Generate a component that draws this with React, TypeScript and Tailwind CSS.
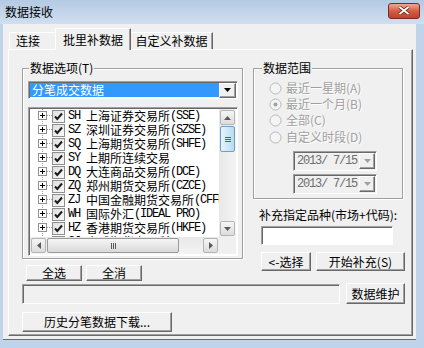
import type { ReactNode } from "react";

const ui = "font-['Noto_Sans_CJK_SC',sans-serif] text-[12px] leading-[14px]";
const mono = "font-['Liberation_Mono','Noto_Sans_CJK_SC',monospace] tracking-[-1.2px]";

const raised =
  "border border-t-white border-l-white border-r-[#696969] border-b-[#696969] shadow-[inset_-1px_-1px_0_#a0a0a0] bg-[#f0f0f0]";
const sunken =
  "border border-t-[#a0a0a0] border-l-[#a0a0a0] border-r-white border-b-white shadow-[inset_1px_1px_0_#696969]";
const etched = "border border-[#a0a0a0] shadow-[inset_1px_1px_0_#fff,1px_1px_0_#fff]";

const exchanges = [
  ["SH", "上海证券交易所", "(SSE)"],
  ["SZ", "深圳证券交易所", "(SZSE)"],
  ["SQ", "上海期货交易所", "(SHFE)"],
  ["SY", "上期所连续交易", ""],
  ["DQ", "大连商品交易所", "(DCE)"],
  ["ZQ", "郑州期货交易所", "(CZCE)"],
  ["ZJ", "中国金融期货交易所", "(CFFEX)"],
  ["WH", "国际外汇", "(IDEAL PRO)"],
  ["HZ", "香港期货交易所", "(HKFE)"],
  ["GJ", "全球期货交易所", ""],
];

const ranges = [
  { label: "最近一星期(A)", checked: false },
  { label: "最近一个月(B)", checked: true },
  { label: "全部(C)", checked: false },
  { label: "自定义时段(D)", checked: false },
];

function Arrow({ dir, color = "#4d4d4d" }: { dir: "up" | "down" | "left" | "right"; color?: string }) {
  const d = {
    up: "M0 4L3.5 0L7 4Z",
    down: "M0 0L7 0L3.5 4Z",
    left: "M4 0L4 7L0 3.5Z",
    right: "M0 0L4 3.5L0 7Z",
  }[dir];
  const vertical = dir === "up" || dir === "down";
  return (
    <svg width={vertical ? 7 : 4} height={vertical ? 4 : 7}>
      <path d={d} fill={color} />
    </svg>
  );
}

function ScrollBtn({ dir }: { dir: "up" | "down" | "left" | "right" }) {
  return (
    <div className="w-[17px] h-[17px] shrink-0 flex items-center justify-center p-[1px]">
      <div className="w-full h-full rounded-[2px] border border-[#b5b5b5] bg-gradient-to-b from-[#f6f6f6] to-[#dcdcdc] flex items-center justify-center">
        <Arrow dir={dir} color="#5a5a5a" />
      </div>
    </div>
  );
}

function TreeMark() {
  return (
    <svg width="14" height="14" className="shrink-0">
      <line x1="4.5" y1="0" x2="4.5" y2="14" stroke="#a0a0a0" strokeDasharray="1 1" />
      <rect x="0.5" y="2.5" width="8" height="8" fill="#fff" stroke="#919191" />
      <path d="M2 6.5H7M4.5 4V9" stroke="#000" />
      <path d="M9 6.5H14" stroke="#a0a0a0" strokeDasharray="1 1" />
    </svg>
  );
}

function Check() {
  return (
    <svg width="13" height="13" className="shrink-0">
      <defs>
        <linearGradient id="cb" x1="0" y1="0" x2="1" y2="1">
          <stop offset="0" stopColor="#dcdcdc" />
          <stop offset="1" stopColor="#fbfbfb" />
        </linearGradient>
      </defs>
      <rect x="0.5" y="0.5" width="12" height="12" fill="url(#cb)" stroke="#8e8f8f" />
      <path d="M3 6.5L5.3 9L10 3.5" fill="none" stroke="#1b1b1b" strokeWidth="2" />
    </svg>
  );
}

function Radio({ checked }: { checked: boolean }) {
  return (
    <svg width="13" height="13" className="shrink-0">
      <circle cx="6.5" cy="6.5" r="5.5" fill="#f4f4f4" stroke="#b9b9b9" />
      {checked && <circle cx="6.5" cy="6.5" r="2" fill="#a0a0a0" />}
    </svg>
  );
}

function Button({ className, children }: { className: string; children: ReactNode }) {
  return (
    <div className={`${raised} ${className} flex items-center justify-center text-black`}>{children}</div>
  );
}

function DateBox() {
  return (
    <div className={`${sunken} w-[84px] h-[20px] bg-[#f0f0f0] flex items-center`}>
      <span className={`${mono} text-[#6d6d6d] ml-[3px] flex-1`}>2013/ 7/15</span>
      <div className={`${raised} w-[16px] h-[16px] mr-[1px] flex items-center justify-center`}>
        <Arrow dir="down" color="#a0a0a0" />
      </div>
    </div>
  );
}

function ExchangeList() {
  return (
    <div className={`${sunken} w-[210px] h-[149px] bg-white flex flex-col p-[1px] pl-[1px]`}>
      <div className="flex flex-1 min-h-0">
        <div className="flex-1 overflow-hidden">
          {exchanges.map(([code, name, ex]) => (
            <div key={code} className="h-[14px] flex items-center pl-[8px] whitespace-nowrap">
              <TreeMark />
              <Check />
              <span className="ml-[3px] flex">
                <span className={mono}>{code}&nbsp;</span>
                <span>{name}</span>
                {ex && <span className={mono}>{ex}</span>}
              </span>
            </div>
          ))}
        </div>
        <div className="w-[17px] flex flex-col bg-gradient-to-r from-[#e8e8e8] to-[#f4f4f4]">
          <ScrollBtn dir="up" />
          <div className="h-[26px] mx-[1px] rounded-[2px] border border-[#6f9fc6] bg-gradient-to-r from-[#e6f4fc] to-[#b7dcf3] flex flex-col items-center justify-center gap-[1px]">
            <div className="w-[6px] h-[1px] bg-[#3c6a8e]" />
            <div className="w-[6px] h-[1px] bg-[#3c6a8e]" />
            <div className="w-[6px] h-[1px] bg-[#3c6a8e]" />
          </div>
          <div className="flex-1" />
          <ScrollBtn dir="down" />
        </div>
      </div>
      <div className="h-[17px] flex">
        <div className="flex-1 flex bg-gradient-to-b from-[#e8e8e8] to-[#f4f4f4]">
          <ScrollBtn dir="left" />
          <div className="w-[132px] my-[1px] rounded-[2px] border border-[#9a9a9a] bg-gradient-to-b from-[#f5f5f5] to-[#d9d9d9] flex items-center justify-center gap-[1px]">
            <div className="w-[1px] h-[6px] bg-[#5a5a5a]" />
            <div className="w-[1px] h-[6px] bg-[#5a5a5a]" />
            <div className="w-[1px] h-[6px] bg-[#5a5a5a]" />
          </div>
          <div className="flex-1" />
          <ScrollBtn dir="right" />
        </div>
        <div className="w-[17px] bg-[#f0f0f0]" />
      </div>
    </div>
  );
}

export default function App() {
  return (
    <div className={`${ui} w-[424px] h-[348px] bg-[#bfd4ea] flex flex-col text-black`}>
      {/* title bar */}
      <div className="h-[24px] shrink-0 flex items-center justify-between pl-[5px] pr-[4px] bg-gradient-to-b from-[#b4cae3] to-[#d0dff0]">
        <span className="text-[12px]">数据接收</span>
        <div className="w-[32px] h-[16px] mb-[3px] rounded-[3px] border border-[#7a2b1d] bg-gradient-to-b from-[#e9a897] via-[#d45d44] to-[#c2402a] flex items-center justify-center">
          <svg width="12" height="9">
            <path d="M1.5 1L10.5 8M10.5 1L1.5 8" stroke="#5a1a10" strokeWidth="3.2" />
            <path d="M1.5 1L10.5 8M10.5 1L1.5 8" stroke="#fff" strokeWidth="1.8" />
          </svg>
        </div>
      </div>

      {/* client */}
      <div className="h-[316px] ml-[3px] mr-[8px] bg-[#f0f0f0] border-b border-[#6c6c6c] pl-[5px] pr-[3px] flex flex-col">
        <div className="h-[25px] shrink-0 flex items-end pl-[1px]">
          <div className="w-[46px] h-[17px] border-t border-l border-white pl-[6px] flex items-center">连接</div>
          <div className="relative z-10 w-[76px] h-[22px] -mb-[1px] bg-[#f0f0f0] border-t border-l border-white border-r border-r-[#696969] shadow-[inset_-1px_0_0_#a0a0a0] flex items-start justify-center pt-[4px]">
            批里补数据
          </div>
          <div className="w-[82px] h-[17px] border-t border-white border-r border-r-[#696969] shadow-[inset_-1px_0_0_#a0a0a0] flex items-center justify-center">
            自定义补数据
          </div>
        </div>

        <div className="h-[287px] border-t border-l border-white border-r border-b border-r-[#696969] border-b-[#696969] shadow-[inset_-1px_-1px_0_#a0a0a0] flex flex-col">
          <div className="h-[232px] flex">
            {/* left column */}
            <div className="ml-[13px] pt-[18px]">
              <div className={`${etched} relative w-[221px] h-[191px] pl-[5px] pt-[12px]`}>
                <span className="absolute top-[-8px] left-[6px] px-[1px] bg-[#f0f0f0]">数据选项(T)</span>
                <div className={`${sunken} w-[210px] h-[18px] bg-white flex items-center p-[1px]`}>
                  <div className="flex-1 h-[14px] bg-[#3399ff] text-white pl-[2px]">分笔成交数据</div>
                  <div className={`${raised} w-[17px] h-[15px] flex items-center justify-center`}>
                    <Arrow dir="down" color="#000" />
                  </div>
                </div>
                <div className="mt-[8px]">
                  <ExchangeList />
                </div>
              </div>
              <div className="mt-[6px] pl-[4px] flex gap-[4px]">
                <Button className="w-[56px] h-[16px]">全选</Button>
                <Button className="w-[56px] h-[16px]">全消</Button>
              </div>
            </div>

            {/* right column */}
            <div className="ml-[10px] pt-[18px]">
              <div className={`${etched} relative w-[150px] h-[131px] pt-[11px]`}>
                <span className="absolute top-[-8px] left-[8px] px-[1px] bg-[#f0f0f0]">数据范围</span>
                {ranges.map((r, i) => (
                  <div
                    key={r.label}
                    className={`h-[16px] flex items-center pl-[15px] ${i === 3 ? "mt-[1px]" : ""}`}
                  >
                    <Radio checked={r.checked} />
                    <span className="ml-[4px] text-[#a0a0a0] [text-shadow:1px_1px_0_#fff]">{r.label}</span>
                  </div>
                ))}
                <div className="ml-[39px] mt-[6px] flex flex-col gap-[3px]">
                  <DateBox />
                  <DateBox />
                </div>
              </div>
              <div className="mt-[9px] ml-[6px] whitespace-nowrap">补充指定品种(市场+代码):</div>
              <div className={`${sunken} mt-[4px] ml-[8px] w-[132px] h-[19px] bg-white`} />
              <div className="mt-[7px] ml-[8px] flex gap-[5px]">
                <Button className="w-[50px] h-[19px]">&lt;-选择</Button>
                <Button className="w-[89px] h-[19px]">开始补充(S)</Button>
              </div>
            </div>
          </div>

          <div className="mt-[1px] flex items-start">
            <div className={`${sunken} ml-[13px] mt-[1px] w-[318px] h-[20px]`} />
            <Button className="ml-[6px] w-[59px] h-[21px]">数据维护</Button>
          </div>
          <Button className="mt-[8px] ml-[13px] w-[150px] h-[20px]">历史分笔数据下载...</Button>
        </div>
      </div>
    </div>
  );
}
